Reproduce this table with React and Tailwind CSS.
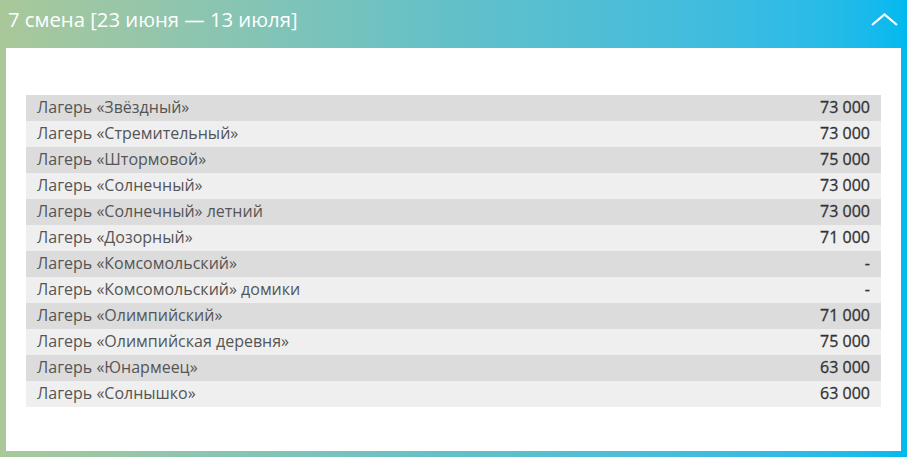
import React from "react";

const rows = [
  ["Лагерь «Звёздный»", "73 000"],
  ["Лагерь «Стремительный»", "73 000"],
  ["Лагерь «Штормовой»", "75 000"],
  ["Лагерь «Солнечный»", "73 000"],
  ["Лагерь «Солнечный» летний", "73 000"],
  ["Лагерь «Дозорный»", "71 000"],
  ["Лагерь «Комсомольский»", "-"],
  ["Лагерь «Комсомольский» домики", "-"],
  ["Лагерь «Олимпийский»", "71 000"],
  ["Лагерь «Олимпийская деревня»", "75 000"],
  ["Лагерь «Юнармеец»", "63 000"],
  ["Лагерь «Солнышко»", "63 000"],
];

export default function App() {
  return (
    <div
      className="w-[907px] h-[457px] bg-gradient-to-r from-[#a9c89a] via-[#62c0c8] to-[#00b9ef] px-[6px] pb-[6px] flex flex-col"
      style={{ fontFamily: '"Open Sans", sans-serif' }}
    >
      <div className="h-[48px] flex items-center justify-between pl-[2px] pr-[3px]">
        <div className="text-white text-[20.3px] leading-none -mt-[10px]">7 смена [23 июня — 13 июля]</div>
        <svg width="27" height="13" viewBox="0 0 27 13" className="-mt-[10px]" fill="none">
          <path d="M1 12 L13.5 1.5 L26 12" stroke="white" strokeWidth="2.2" />
        </svg>
      </div>
      <div className="flex-1 bg-white pt-[47px] px-[20px]">
        <div className="flex flex-col">
          {rows.map(([name, price], i) => (
            <div
              key={i}
              className={`h-[26px] flex items-center justify-between pl-[11px] pr-[11px] text-[16px] leading-[26px] ${i % 2 === 0 ? "bg-[#dcdcdc]" : "bg-[#efefef]"}`}
            >
              <span className="text-[#555555] -mt-[2px]">{name}</span>
              <span className="text-[#333333] -mt-[2px] [-webkit-text-stroke:0.3px_#333333]">{price}</span>
            </div>
          ))}
        </div>
      </div>
    </div>
  );
}
